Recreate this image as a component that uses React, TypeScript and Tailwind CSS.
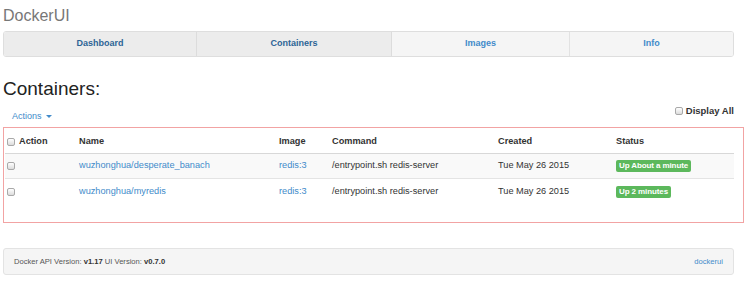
import React from "react";

function Check() {
  return (
    <span className="inline-block w-[8px] h-[8px] rounded-[2px] border border-[#a9a9a9] bg-gradient-to-b from-[#ffffff] to-[#dcdcdc] shrink-0" />
  );
}

const rows = [
  { name: "wuzhonghua/desperate_banach", status: "Up About a minute" },
  { name: "wuzhonghua/myredis", status: "Up 2 minutes" },
];

export default function App() {
  return (
    <div
      className="w-[750px] h-[294px] bg-white text-[#333] overflow-hidden"
      style={{ fontFamily: '"Liberation Sans", Arial, sans-serif' }}
    >
      <div className="pt-[6px] pl-[3px] text-[16px] leading-[20px] text-[#777]">DockerUI</div>

      <div className="mt-[5px] ml-[3px] w-[731px] h-[26px] flex border border-[#dedede] rounded-[3px] overflow-hidden text-[9px] font-bold">
        <div className="w-[193px] flex items-center justify-center bg-[#ececec] text-[#2d6496] border-r border-[#dcdcdc]">Dashboard</div>
        <div className="w-[195px] flex items-center justify-center bg-[#ececec] text-[#2d6496] border-r border-[#dcdcdc]">Containers</div>
        <div className="w-[178px] flex items-center justify-center bg-[#f5f5f5] text-[#428bca] border-r border-[#e2e2e2]">Images</div>
        <div className="flex-1 flex items-center justify-center bg-[#f5f5f5] text-[#428bca]">Info</div>
      </div>

      <div className="mt-[20px] pl-[3px] text-[19px] leading-[24px] text-[#222]">Containers:</div>

      <div className="h-[26px] flex items-start justify-between pl-[12px] pr-[16px]">
        <div className="mt-[9px] flex items-center gap-[4px] text-[9px] leading-[12px] text-[#428bca]">
          <span>Actions</span>
          <span className="inline-block w-0 h-0 border-l-[3px] border-r-[3px] border-t-[3px] border-l-transparent border-r-transparent border-t-[#428bca]" />
        </div>
        <div className="mt-[4px] flex items-center gap-[3px] text-[9.5px] leading-[12px] font-bold text-[#333]">
          <Check />
          <span>Display All</span>
        </div>
      </div>

      <div className="ml-[3px] w-[741px] h-[96px] border border-[#f2a3a3]">
        <div className="ml-[1px] w-[729px] text-[9.2px]">
          <div className="h-[26px] pt-[3px] grid grid-cols-[72px_200px_53px_166px_118px_1fr] items-center pl-[2px] font-bold border-b-[1px] border-[#d8d8d8]">
            <div className="flex items-center gap-[4px]">
              <Check />
              <span>Action</span>
            </div>
            <div>Name</div>
            <div>Image</div>
            <div>Command</div>
            <div>Created</div>
            <div>Status</div>
          </div>
          {rows.map((r, i) => (
            <div
              key={r.name}
              className={
                "h-[25px] grid grid-cols-[72px_200px_53px_166px_118px_1fr] items-center pl-[2px] " +
                (i === 0 ? "bg-[#f9f9f9] border-b border-[#e4e4e4]" : "")
              }
            >
              <div className="flex items-center">
                <Check />
              </div>
              <div className="text-[#428bca]">{r.name}</div>
              <div className="text-[#428bca]">redis:3</div>
              <div>/entrypoint.sh redis-server</div>
              <div>Tue May 26 2015</div>
              <div>
                <span className="inline-block bg-[#5cb85c] text-white font-bold text-[8px] leading-[12px] px-[3px] rounded-[2px] tracking-[-0.1px]">
                  {r.status}
                </span>
              </div>
            </div>
          ))}
        </div>
      </div>

      <div className="mt-[25px] ml-[3px] w-[731px] h-[27px] flex items-center justify-between pl-[10px] pr-[10px] bg-[#f5f5f5] border border-[#e3e3e3] rounded-[3px] text-[7.6px] text-[#555]">
        <div>
          Docker API Version: <b className="text-[#333]">v1.17</b> UI Version: <b className="text-[#333]">v0.7.0</b>
        </div>
        <div className="text-[#428bca]">dockerui</div>
      </div>
    </div>
  );
}
